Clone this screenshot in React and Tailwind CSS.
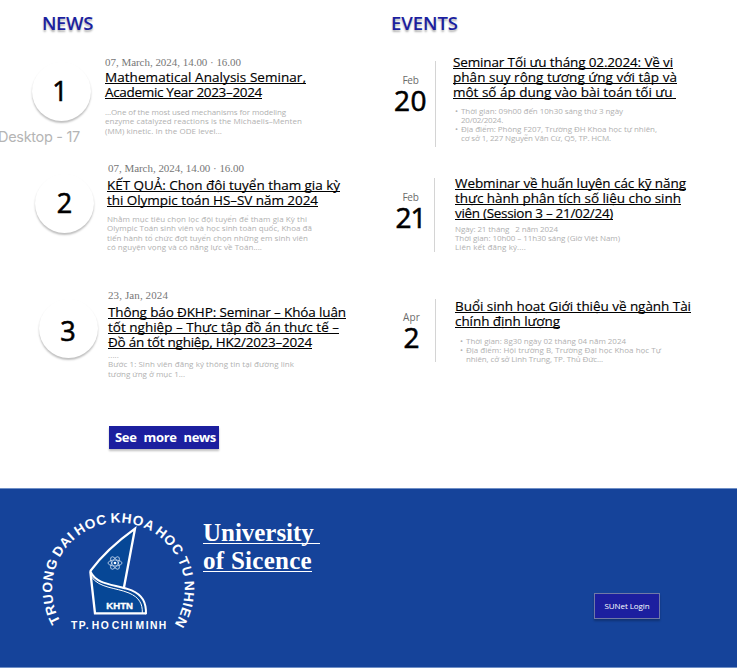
import { useLayoutEffect, useRef, useState } from "react";

// A single line of text whose tracking is adjusted so that it spans `w` pixels.
function Line({ w, className = "", children }) {
  const ref = useRef(null);
  const [spacing, setSpacing] = useState(0);
  useLayoutEffect(() => {
    const el = ref.current;
    el.style.letterSpacing = "0px";
    const next = (w - el.getBoundingClientRect().width) / el.textContent.length;
    el.style.letterSpacing = `${next}px`;
    setSpacing(next);
  }, [w, children]);
  return (
    <span className="block whitespace-pre">
      <span ref={ref} className={className} style={{ letterSpacing: spacing }}>
        {children}
      </span>
    </span>
  );
}

const titleLine = "underline decoration-1 underline-offset-[1px] [text-decoration-skip-ink:none]";

function Title({ lines }) {
  return (
    <h3 className="text-[13.5px] leading-[15px] text-black [-webkit-text-stroke:0.15px_black]">
      {lines.map(([text, w]) => (
        <Line key={text} w={w} className={titleLine}>{text}</Line>
      ))}
    </h3>
  );
}

function Small({ lines, className = "" }) {
  return (
    <div className={`text-[8px] leading-[9.25px] text-[#b1b1b1] ${className}`}>
      {lines.map(([text, w]) => (
        <Line key={text} w={w}>{text}</Line>
      ))}
    </div>
  );
}

function Bullet({ lines }) {
  return (
    <li className="flex text-[8px] leading-[9.25px] text-[#b1b1b1]">
      <span className="w-[6px] shrink-0">•</span>
      <Small lines={lines} />
    </li>
  );
}

function Circle({ children, className }) {
  return (
    <div className={`flex size-[59px] shrink-0 items-center justify-center rounded-full bg-white text-[27px] leading-none [-webkit-text-stroke:0.6px_black] shadow-[0_2px_2px_rgba(0,0,0,0.25)] ${className}`}>
      {children}
    </div>
  );
}

function Day({ month, monthW, day, dayW, className }) {
  return (
    <div className={`flex w-[55px] shrink-0 flex-col items-center ${className}`}>
      <div className="text-[10px] leading-[12px] text-[#6b6b6b]"><Line w={monthW}>{month}</Line></div>
      <div className="-mt-px text-[28px] leading-[30px] text-black [-webkit-text-stroke:0.6px_black]"><Line w={dayW}>{day}</Line></div>
    </div>
  );
}

function Logo() {
  return (
    <svg className="h-[133px] w-[170px] shrink-0" viewBox="0 75 510 399">
      <defs>
        <path id="ring" d="M 92 425 A 199 199 0 1 1 438 425" />
      </defs>
      <text fill="#fff" fontFamily="Liberation Sans" fontWeight="700" fontSize="41" wordSpacing="-5">
        <textPath href="#ring" textLength="840" lengthAdjust="spacing">TRUONG DAI HOC KHOA HOC TU NHIEN</textPath>
      </text>
      <path d="M 315 146 C 265 182 216 226 182 272 L 182 284 L 195 400 L 348 400 C 349 361 322 336 281 327 Z" fill="#064796" />
      <path d="M 281 327 L 315 146 C 265 182 216 226 182 272 Q 180 276 182 284 L 195 400 L 348 400" fill="none" stroke="#fff" strokeWidth="7" />
      <path d="M 182 276 C 202 318 260 312 305 331 C 337 345 349 366 348 403" fill="none" stroke="#fff" strokeWidth="6" />
      <path d="M 184 290 C 208 325 256 322 297 339 C 328 352 338 372 337 399" fill="none" stroke="#fff" strokeWidth="3" />
      <g fill="none" stroke="#d6e4f5" strokeWidth="2.2">
        <ellipse cx="255" cy="249" rx="21" ry="9" />
        <ellipse cx="255" cy="249" rx="21" ry="9" transform="rotate(60 255 249)" />
        <ellipse cx="255" cy="249" rx="21" ry="9" transform="rotate(120 255 249)" />
      </g>
      <circle cx="255" cy="249" r="4" fill="#fff" />
      <text x="229" y="388" fill="#fff" fontFamily="Liberation Sans" fontWeight="700" fontSize="26" stroke="#fff" strokeWidth="1" textLength="80" lengthAdjust="spacingAndGlyphs">KHTN</text>
      <text x="123" y="446" fill="#fff" fontFamily="Liberation Sans" fontWeight="700" fontSize="31" wordSpacing="-8" textLength="286">TP. HO CHI MINH</text>
    </svg>
  );
}

const date = "font-['Liberation_Serif',serif] text-[11px] leading-[12px] text-[#777]";
const heading = "text-[18.5px] leading-[24px] font-semibold text-[#1c1f9f] [text-shadow:0_2px_2px_rgba(0,0,0,0.3)]";

export default function App() {
  return (
    <div className="relative h-[671px] w-[737px] overflow-hidden bg-white font-['Open_Sans','Noto_Sans',sans-serif] text-black">
      <div className="flex h-[488px]">
        <section className="w-[380px] shrink-0">
          <h2 className={`ml-[42px] h-[56px] pt-[11px] ${heading}`}><Line w={51}>NEWS</Line></h2>

          <article className="flex h-[106px]">
            <Circle className="mt-[6px] ml-[32px] pr-[3px] pb-[2px]">1</Circle>
            <div className="ml-[14px]">
              <div className={`h-[13.5px] ${date}`}><Line w={136}>07, March, 2024, 14.00 · 16.00</Line></div>
              <Title lines={[["Mathematical Analysis Seminar,", 201], ["Academic Year 2023–2024", 157]]} />
              <Small className="mt-[7.5px]" lines={[
                ["...One of the most used mechanisms for modeling", 181],
                ["enzyme catalyzed reactions is the Michaelis–Menten", 197],
                ["(MM) kinetic. In the ODE level...", 117],
              ]} />
            </div>
          </article>

          <article className="flex h-[127px]">
            <Circle className="mt-[12px] ml-[35px] pb-[3px]">2</Circle>
            <div className="ml-[13px]">
              <div className={`ml-px h-[15.5px] ${date}`}><Line w={136}>07, March, 2024, 14.00 · 16.00</Line></div>
              <Title lines={[["KẾT QUẢ: Chọn đội tuyển tham gia kỳ", 233], ["thi Olympic toán HS–SV năm 2024", 211]]} />
              <Small className="mt-[6.5px]" lines={[
                ["Nhằm mục tiêu chọn lọc đội tuyển để tham gia Kỳ thi", 200],
                ["Olympic Toán sinh viên và học sinh toàn quốc, Khoa đã", 205],
                ["tiến hành tổ chức đợt tuyển chọn những em sinh viên", 201],
                ["có nguyện vọng và có năng lực về Toán....", 155],
              ]} />
            </div>
          </article>

          <article className="flex h-[137px]">
            <Circle className="mt-[10px] ml-[39px] pt-[3px] pr-px">3</Circle>
            <div className="ml-[10px]">
              <div className={`h-[15.5px] ${date}`}><Line w={60}>23, Jan, 2024</Line></div>
              <Title lines={[
                ["Thông báo ĐKHP: Seminar – Khóa luận", 238],
                ["tốt nghiệp – Thực tập đồ án thực tế –", 231],
                ["Đồ án tốt nghiệp, HK2/2023–2024", 204],
              ]} />
              <Small className="mt-[0.5px]" lines={[
                [".....", 11],
                ["Bước 1: Sinh viên đăng ký thông tin tại đường link", 186],
                ["tương ứng ở mục 1...", 77],
              ]} />
            </div>
          </article>

          <button className="ml-[109px] flex h-[23px] w-[110px] items-center bg-[#1c1f9f] pl-[6px] text-[13px] leading-none font-bold text-white shadow-[0_2px_2px_rgba(0,0,0,0.25)] [word-spacing:4px]">
            <Line w={101}>See more news</Line>
          </button>
        </section>

        <section className="w-[357px] shrink-0">
          <h2 className={`ml-[11px] h-[54px] pt-[11px] ${heading}`}><Line w={67}>EVENTS</Line></h2>

          <article className="flex h-[121px]">
            <Day className="mt-[20px] ml-[3px]" month="Feb" monthW={16} day="20" dayW={33} />
            <div className="mt-[7px] -ml-[3px] h-[86px] w-px bg-[#d4d4d4]" />
            <div className="ml-[17px] pt-[0.5px]">
              <Title lines={[
                ["Seminar Tối ưu tháng 02.2024: Về vi", 220],
                ["phân suy rộng tương ứng với tập và", 224],
                ["một số áp dụng vào bài toán tối ưu\u00a0", 223],
              ]} />
              <ul className="mt-[6px] ml-[2px]">
                <Bullet lines={[["Thời gian: 09h00 đến 10h30 sáng thứ 3 ngày", 162], ["20/02/2024.", 42]]} />
                <Bullet lines={[["Địa điểm: Phòng F207, Trường ĐH Khoa học tự nhiên,", 196], ["cơ sở 1, 227 Nguyễn Văn Cừ, Q5, TP. HCM.", 150]]} />
              </ul>
            </div>
          </article>

          <article className="flex h-[123px]">
            <Day className="mt-[16px] ml-[3px]" month="Feb" monthW={16} day="21" dayW={30} />
            <div className="mt-[3px] -ml-[4px] h-[74px] w-px bg-[#d4d4d4]" />
            <div className="ml-[20px] pt-[0.5px]">
              <Title lines={[
                ["Webminar về huấn luyện các kỹ năng", 231],
                ["thực hành phân tích số liệu cho sinh", 226],
                ["viên (Session 3 – 21/02/24)", 158],
              ]} />
              <Small className="mt-[3px]" lines={[
                ["Ngày: 21 tháng   2 năm 2024", 103],
                ["Thời gian: 10h00 – 11h30 sáng (Giờ Việt Nam)", 165],
                ["Liên kết đăng ký....", 71],
              ]} />
            </div>
          </article>

          <article className="flex">
            <Day className="mt-[13px] ml-[4px]" month="Apr" monthW={17} day="2" dayW={16} />
            <div className="mt-[1px] -ml-[4px] h-[63px] w-px bg-[#d4d4d4]" />
            <div className="ml-[19px] pt-[0.5px]">
              <Title lines={[["Buổi sinh hoạt Giới thiệu về ngành Tài", 236], ["chính định lượng", 105]]} />
              <ul className="mt-[7px] ml-[5px]">
                <Bullet lines={[["Thời gian: 8g30 ngày 02 tháng 04 năm 2024", 160]]} />
                <Bullet lines={[["Địa điểm: Hội trường B, Trường Đại học Khoa học Tự", 195], ["nhiên, cở sở Linh Trung, TP. Thủ Đức...", 137]]} />
              </ul>
            </div>
          </article>
        </section>
      </div>

      <footer className="flex h-[180px] border-y border-[#6f8fc6] bg-[#15439a] text-white">
        <div className="mt-[16px] ml-[30px]"><Logo /></div>
        <div className="mt-[30px] ml-[3px] w-[391px] font-['Liberation_Serif',serif] text-[25px] leading-[28px] font-bold">
          <Line w={117} className="underline decoration-1 underline-offset-[2px] [text-decoration-skip-ink:none]">{"University\u00a0"}</Line>
          <Line w={109} className="underline decoration-1 underline-offset-[2px] [text-decoration-skip-ink:none]">of Sicence</Line>
        </div>
        <button className="mt-[104px] flex h-[26px] w-[66px] items-center justify-center border border-[#7079a6] bg-[#1c1f9f] text-[8px] leading-none font-medium shadow-[0_2px_2px_rgba(0,0,0,0.25)]">
          <Line w={45}>SUNet Login</Line>
        </button>
      </footer>

      <span className="absolute top-[128px] -left-[2px] font-['Inter',sans-serif] text-[14.5px] leading-[18px] text-[#b5b5b5]">
        <Line w={82}>Desktop - 17</Line>
      </span>
    </div>
  );
}
